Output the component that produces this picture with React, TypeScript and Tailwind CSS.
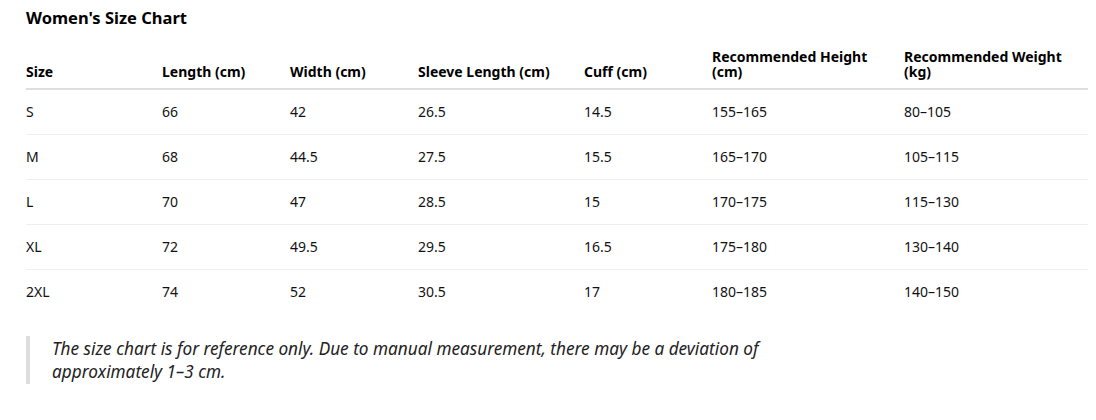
import React from "react";

const rows = [
  ["S", "66", "42", "26.5", "14.5", "155–165", "80–105"],
  ["M", "68", "44.5", "27.5", "15.5", "165–170", "105–115"],
  ["L", "70", "47", "28.5", "15", "170–175", "115–130"],
  ["XL", "72", "49.5", "29.5", "16.5", "175–180", "130–140"],
  ["2XL", "74", "52", "30.5", "17", "180–185", "140–150"],
];

const headers = [
  "Size",
  "Length (cm)",
  "Width (cm)",
  "Sleeve Length (cm)",
  "Cuff (cm)",
  "Recommended Height (cm)",
  "Recommended Weight (kg)",
];

const widths = ["w-[136px]", "w-[128px]", "w-[128px]", "w-[166px]", "w-[128px]", "w-[192px]", "w-[184px]"];

export default function App() {
  return (
    <div className="bg-white text-[#111] px-[26px] pt-[8px] pb-6 w-[1096px] h-[420px]" style={{ fontFamily: '"Noto Sans", "Segoe UI", sans-serif' }}>
      <h2 className="text-[16.5px] font-bold leading-[20px] text-black">Women's Size Chart</h2>
      <table className="table-fixed w-[1062px] mt-[21px] border-collapse text-[14px]">
        <colgroup>
          {widths.map((w, i) => (
            <col key={i} className={w} />
          ))}
        </colgroup>
        <thead>
          <tr className="border-b-2 border-[#dedede]">
            {headers.map((h, i) => (
              <th key={i} className="text-left align-bottom font-bold leading-[15px] pr-3 pb-[9px] pt-0 text-black">
                {h}
              </th>
            ))}
          </tr>
        </thead>
        <tbody>
          {rows.map((r, i) => (
            <tr key={i} className={i < rows.length - 1 ? "border-b border-[#efefef]" : ""}>
              {r.map((c, j) => (
                <td key={j} className="py-3 leading-[20px] pr-3">
                  {c}
                </td>
              ))}
            </tr>
          ))}
        </tbody>
      </table>
      <blockquote className="mt-[22px] border-l-4 border-[#dddddd] pl-[22px] py-[1px] italic text-[17.2px] leading-[23px] text-[#222] w-[760px]">
        The size chart is for reference only. Due to manual measurement, there may be a deviation of approximately 1–3 cm.
      </blockquote>
    </div>
  );
}
